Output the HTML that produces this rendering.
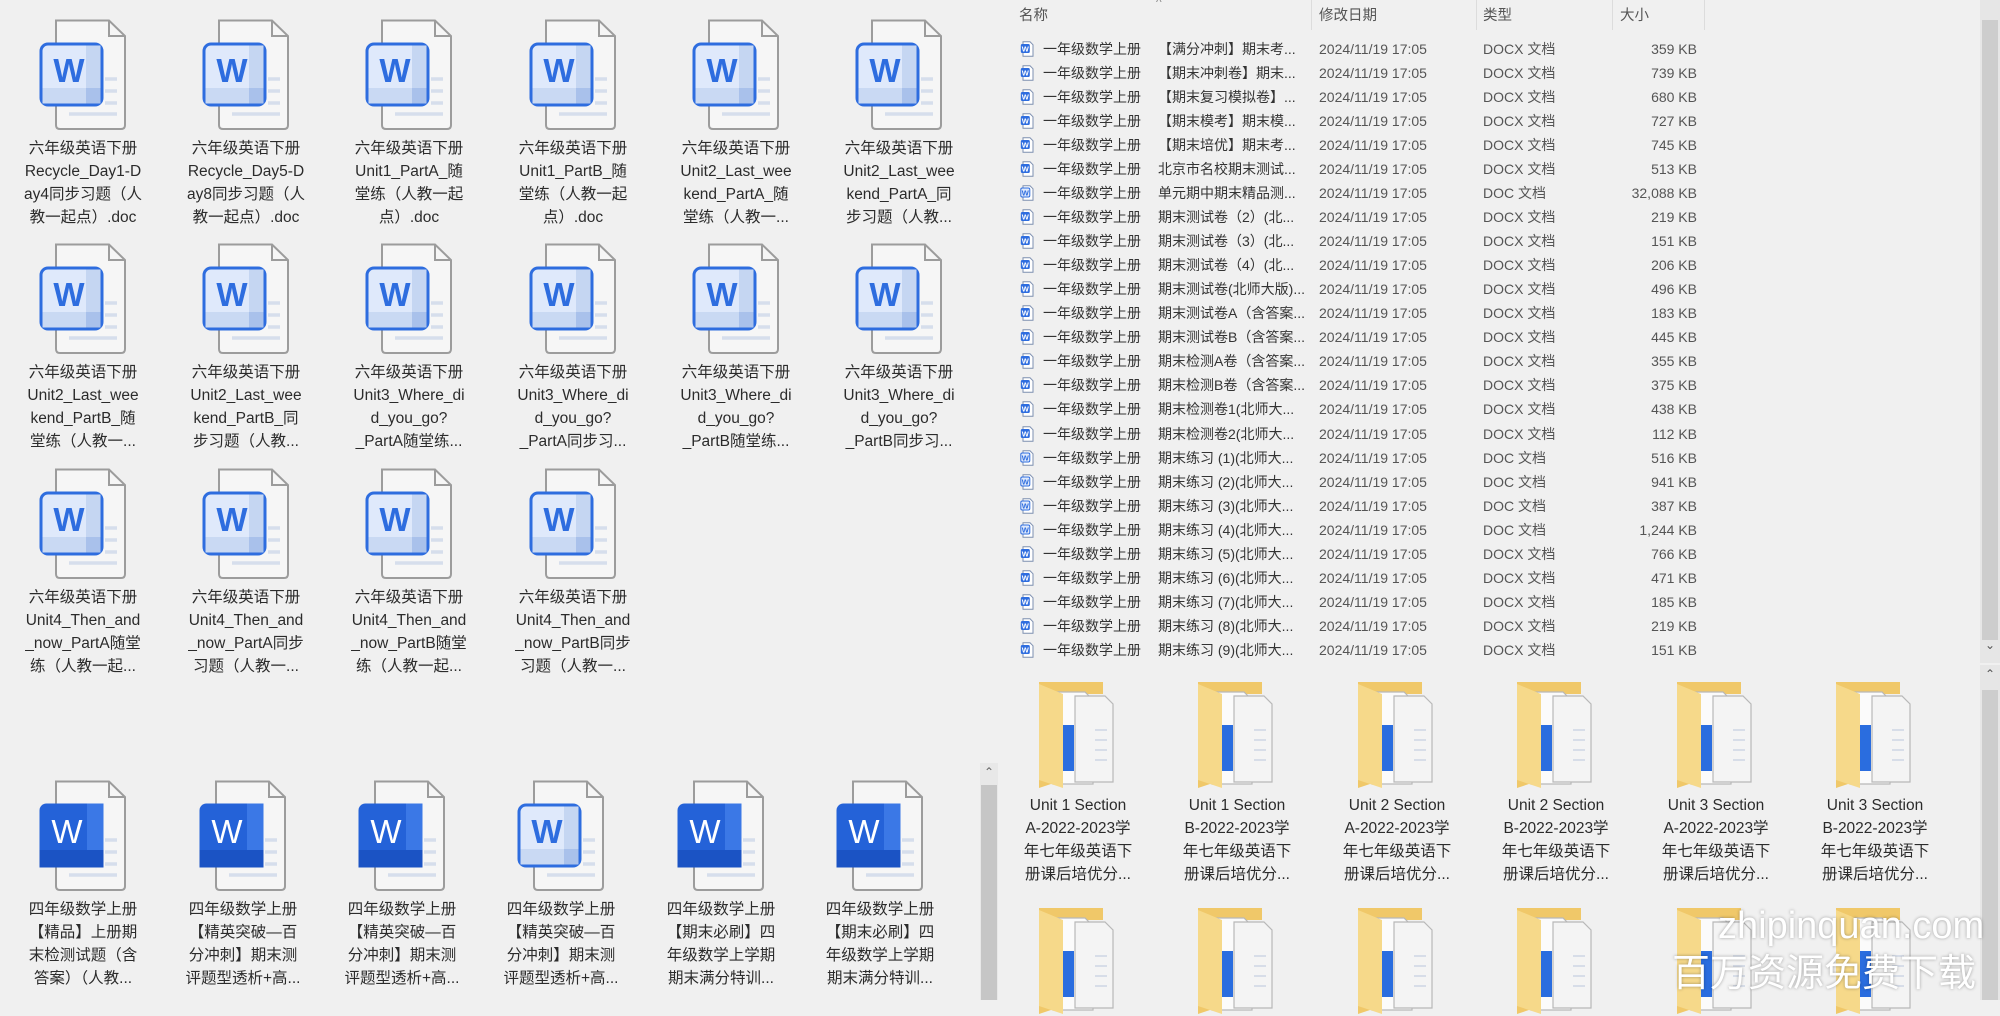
<!DOCTYPE html>
<html><head><meta charset="utf-8">
<style>
*{margin:0;padding:0;box-sizing:border-box}
body{width:2000px;height:1000px;background:#f0f0f0;position:relative;overflow:hidden;font-family:"Liberation Sans","Noto Sans CJK SC",sans-serif;color:#2b2b2b}
.it{position:absolute;width:170px;text-align:center;font-size:15.5px;line-height:23px}
.it svg{display:block;margin:0 auto}
.it div{white-space:nowrap}
.ic{position:absolute}
.hd{position:absolute;top:4px;font-size:14.5px;color:#555;line-height:24px}
.L{position:absolute;left:1020px;top:37px;width:700px;font-size:14px;line-height:24.04px;color:#333}
.L>div{position:relative;height:24.04px}
.L svg{position:absolute;left:0;top:4px}
.L span{position:absolute}
.a{left:23px}.b{left:138px}.c{left:299px;color:#555}.d{left:463px;color:#555}.e{right:23px;color:#555}
</style></head><body>
<svg width="0" height="0" style="position:absolute">
<defs>
<symbol id="wl" viewBox="0 0 88 112">
<path d="M17,1.5 H70 L86,17 V106 Q86,110 82,110 H21 Q17,110 17,106 Z" fill="#f6f6f6" stroke="#9c9c9c" stroke-width="2"/>
<path d="M70,1.5 V17 H86" fill="none" stroke="#9c9c9c" stroke-width="2"/>
<g stroke="#d6deec" stroke-width="3.5"><line x1="66" y1="60" x2="78" y2="60"/><line x1="66" y1="72" x2="78" y2="72"/><line x1="66" y1="84" x2="78" y2="84"/><line x1="30" y1="95" x2="78" y2="95"/></g>
<rect x="2" y="25" width="61" height="61" rx="7" fill="#dfe9fb" stroke="#2e6ddf" stroke-width="3"/>
<rect x="47" y="26.5" width="14.5" height="58" fill="#c5d6f2"/>
<rect x="3.5" y="69" width="58" height="15.5" fill="#c9d9f3"/>
<rect x="47" y="69" width="14.5" height="15.5" fill="#a9c1eb"/>
<text x="30" y="63" text-anchor="middle" font-family="Liberation Sans,sans-serif" font-weight="bold" font-size="33" fill="#2e6ddf">W</text>
</symbol>
<symbol id="wd" viewBox="0 0 88 112">
<path d="M17,1.5 H70 L86,17 V106 Q86,110 82,110 H21 Q17,110 17,106 Z" fill="#f6f6f6" stroke="#9c9c9c" stroke-width="2"/>
<path d="M70,1.5 V17 H86" fill="none" stroke="#9c9c9c" stroke-width="2"/>
<g stroke="#d6deec" stroke-width="3.5"><line x1="66" y1="60" x2="78" y2="60"/><line x1="66" y1="72" x2="78" y2="72"/><line x1="66" y1="84" x2="78" y2="84"/><line x1="30" y1="95" x2="78" y2="95"/></g>
<rect x="0.5" y="23.5" width="64" height="64" rx="7" fill="#2462d8"/>
<rect x="48" y="23.5" width="16.5" height="64" fill="#3b78e6"/>
<rect x="0.5" y="70" width="64" height="17.5" fill="#1b53c4"/>
<text x="28" y="63" text-anchor="middle" font-family="Liberation Sans,sans-serif" font-size="33" fill="#fff">W</text>
</symbol>
<symbol id="fd" viewBox="0 0 82 110">
<path d="M2,2 H66 V14 H26 V100 L2,108 Z" fill="#f0c869"/>
<path d="M16,12 H48 L56,20 V104 H16 Z" fill="#fbfbfb" stroke="#b8b8b8" stroke-width="1.2"/>
<path d="M38,16 H68 L76,24 V102 H38 Z" fill="#f4f4f4" stroke="#b8b8b8" stroke-width="1.2"/>
<g stroke="#d7dde8" stroke-width="2"><line x1="58" y1="50" x2="70" y2="50"/><line x1="58" y1="60" x2="70" y2="60"/><line x1="58" y1="70" x2="70" y2="70"/><line x1="58" y1="80" x2="70" y2="80"/></g>
<rect x="22" y="45" width="15" height="46" fill="#2a6ddf"/>
<path d="M2,4 L26,14 V108 L2,100 Z" fill="#f6d98a"/>
</symbol>
<symbol id="sm" viewBox="0 0 14 16">
<path d="M3,0.8 H10 L13,3.8 V15.2 H3 Z" fill="#fff" stroke="#7d8fb0" stroke-width="1"/>
<rect x="0.8" y="3" width="9" height="9" rx="1.5" fill="#2e6ddf"/>
<text x="5.3" y="10.5" text-anchor="middle" font-family="Liberation Sans,sans-serif" font-size="7.5" font-weight="bold" fill="#fff">W</text>
</symbol>
<symbol id="sl" viewBox="0 0 14 16">
<path d="M3,0.8 H10 L13,3.8 V15.2 H3 Z" fill="#fff" stroke="#7d8fb0" stroke-width="1"/>
<rect x="0.8" y="3" width="9" height="9" rx="1.5" fill="#dfe9fb" stroke="#2e6ddf" stroke-width="1"/>
<text x="5.3" y="10.5" text-anchor="middle" font-family="Liberation Sans,sans-serif" font-size="7.5" font-weight="bold" fill="#2e6ddf">W</text>
</symbol>
</defs></svg>

<!-- Left top grid -->
<div class="it" style="left:-2px;top:19px"><svg width="100" height="112" viewBox="-6 0 100 112"><use href="#wl" width="88" height="112"/></svg><div style="margin-top:6px">六年级英语下册</div><div>Recycle_Day1-D</div><div>ay4同步习题（人</div><div>教一起点）.doc</div></div>
<div class="it" style="left:161px;top:19px"><svg width="100" height="112" viewBox="-6 0 100 112"><use href="#wl" width="88" height="112"/></svg><div style="margin-top:6px">六年级英语下册</div><div>Recycle_Day5-D</div><div>ay8同步习题（人</div><div>教一起点）.doc</div></div>
<div class="it" style="left:324px;top:19px"><svg width="100" height="112" viewBox="-6 0 100 112"><use href="#wl" width="88" height="112"/></svg><div style="margin-top:6px">六年级英语下册</div><div>Unit1_PartA_随</div><div>堂练（人教一起</div><div>点）.doc</div></div>
<div class="it" style="left:488px;top:19px"><svg width="100" height="112" viewBox="-6 0 100 112"><use href="#wl" width="88" height="112"/></svg><div style="margin-top:6px">六年级英语下册</div><div>Unit1_PartB_随</div><div>堂练（人教一起</div><div>点）.doc</div></div>
<div class="it" style="left:651px;top:19px"><svg width="100" height="112" viewBox="-6 0 100 112"><use href="#wl" width="88" height="112"/></svg><div style="margin-top:6px">六年级英语下册</div><div>Unit2_Last_wee</div><div>kend_PartA_随</div><div>堂练（人教一...</div></div>
<div class="it" style="left:814px;top:19px"><svg width="100" height="112" viewBox="-6 0 100 112"><use href="#wl" width="88" height="112"/></svg><div style="margin-top:6px">六年级英语下册</div><div>Unit2_Last_wee</div><div>kend_PartA_同</div><div>步习题（人教...</div></div>

<div class="it" style="left:-2px;top:243px"><svg width="100" height="112" viewBox="-6 0 100 112"><use href="#wl" width="88" height="112"/></svg><div style="margin-top:6px">六年级英语下册</div><div>Unit2_Last_wee</div><div>kend_PartB_随</div><div>堂练（人教一...</div></div>
<div class="it" style="left:161px;top:243px"><svg width="100" height="112" viewBox="-6 0 100 112"><use href="#wl" width="88" height="112"/></svg><div style="margin-top:6px">六年级英语下册</div><div>Unit2_Last_wee</div><div>kend_PartB_同</div><div>步习题（人教...</div></div>
<div class="it" style="left:324px;top:243px"><svg width="100" height="112" viewBox="-6 0 100 112"><use href="#wl" width="88" height="112"/></svg><div style="margin-top:6px">六年级英语下册</div><div>Unit3_Where_di</div><div>d_you_go?</div><div>_PartA随堂练...</div></div>
<div class="it" style="left:488px;top:243px"><svg width="100" height="112" viewBox="-6 0 100 112"><use href="#wl" width="88" height="112"/></svg><div style="margin-top:6px">六年级英语下册</div><div>Unit3_Where_di</div><div>d_you_go?</div><div>_PartA同步习...</div></div>
<div class="it" style="left:651px;top:243px"><svg width="100" height="112" viewBox="-6 0 100 112"><use href="#wl" width="88" height="112"/></svg><div style="margin-top:6px">六年级英语下册</div><div>Unit3_Where_di</div><div>d_you_go?</div><div>_PartB随堂练...</div></div>
<div class="it" style="left:814px;top:243px"><svg width="100" height="112" viewBox="-6 0 100 112"><use href="#wl" width="88" height="112"/></svg><div style="margin-top:6px">六年级英语下册</div><div>Unit3_Where_di</div><div>d_you_go?</div><div>_PartB同步习...</div></div>

<div class="it" style="left:-2px;top:468px"><svg width="100" height="112" viewBox="-6 0 100 112"><use href="#wl" width="88" height="112"/></svg><div style="margin-top:6px">六年级英语下册</div><div>Unit4_Then_and</div><div>_now_PartA随堂</div><div>练（人教一起...</div></div>
<div class="it" style="left:161px;top:468px"><svg width="100" height="112" viewBox="-6 0 100 112"><use href="#wl" width="88" height="112"/></svg><div style="margin-top:6px">六年级英语下册</div><div>Unit4_Then_and</div><div>_now_PartA同步</div><div>习题（人教一...</div></div>
<div class="it" style="left:324px;top:468px"><svg width="100" height="112" viewBox="-6 0 100 112"><use href="#wl" width="88" height="112"/></svg><div style="margin-top:6px">六年级英语下册</div><div>Unit4_Then_and</div><div>_now_PartB随堂</div><div>练（人教一起...</div></div>
<div class="it" style="left:488px;top:468px"><svg width="100" height="112" viewBox="-6 0 100 112"><use href="#wl" width="88" height="112"/></svg><div style="margin-top:6px">六年级英语下册</div><div>Unit4_Then_and</div><div>_now_PartB同步</div><div>习题（人教一...</div></div>

<!-- Left bottom grid -->
<div class="it" style="left:-2px;top:780px"><svg width="100" height="112" viewBox="-6 0 100 112"><use href="#wd" width="88" height="112"/></svg><div style="margin-top:6px">四年级数学上册</div><div>【精品】上册期</div><div>末检测试题（含</div><div>答案）（人教...</div></div>
<div class="it" style="left:158px;top:780px"><svg width="100" height="112" viewBox="-6 0 100 112"><use href="#wd" width="88" height="112"/></svg><div style="margin-top:6px">四年级数学上册</div><div>【精英突破—百</div><div>分冲刺】期末测</div><div>评题型透析+高...</div></div>
<div class="it" style="left:317px;top:780px"><svg width="100" height="112" viewBox="-6 0 100 112"><use href="#wd" width="88" height="112"/></svg><div style="margin-top:6px">四年级数学上册</div><div>【精英突破—百</div><div>分冲刺】期末测</div><div>评题型透析+高...</div></div>
<div class="it" style="left:476px;top:780px"><svg width="100" height="112" viewBox="-6 0 100 112"><use href="#wl" width="88" height="112"/></svg><div style="margin-top:6px">四年级数学上册</div><div>【精英突破—百</div><div>分冲刺】期末测</div><div>评题型透析+高...</div></div>
<div class="it" style="left:636px;top:780px"><svg width="100" height="112" viewBox="-6 0 100 112"><use href="#wd" width="88" height="112"/></svg><div style="margin-top:6px">四年级数学上册</div><div>【期末必刷】四</div><div>年级数学上学期</div><div>期末满分特训...</div></div>
<div class="it" style="left:795px;top:780px"><svg width="100" height="112" viewBox="-6 0 100 112"><use href="#wd" width="88" height="112"/></svg><div style="margin-top:6px">四年级数学上册</div><div>【期末必刷】四</div><div>年级数学上学期</div><div>期末满分特训...</div></div>

<!-- left bottom scrollbar -->
<div style="position:absolute;left:980px;top:763px;width:18px;height:237px;background:#e8e8e8"></div>
<div style="position:absolute;left:981px;top:785px;width:16px;height:215px;background:#c6c6c6"></div>
<div style="position:absolute;left:984px;top:765px;font-size:12px;color:#666">&#8963;</div>

<!-- right top list -->
<div class="hd" style="left:1019px">名称</div>
<div class="hd" style="left:1156px;top:-10px;color:#888;font-size:12px">^</div>
<div class="hd" style="left:1319px">修改日期</div>
<div class="hd" style="left:1483px">类型</div>
<div class="hd" style="left:1620px">大小</div>
<div style="position:absolute;left:1311px;top:0;width:1px;height:30px;background:#dcdcdc"></div>
<div style="position:absolute;left:1476px;top:0;width:1px;height:30px;background:#dcdcdc"></div>
<div style="position:absolute;left:1612px;top:0;width:1px;height:30px;background:#dcdcdc"></div>
<div style="position:absolute;left:1704px;top:0;width:1px;height:30px;background:#dcdcdc"></div>

<div class="L">
<div><svg width="14" height="16"><use href="#sm"/></svg><span class="a">一年级数学上册</span><span class="b">【满分冲刺】期末考...</span><span class="c">2024/11/19 17:05</span><span class="d">DOCX 文档</span><span class="e">359 KB</span></div>
<div><svg width="14" height="16"><use href="#sm"/></svg><span class="a">一年级数学上册</span><span class="b">【期末冲刺卷】期末...</span><span class="c">2024/11/19 17:05</span><span class="d">DOCX 文档</span><span class="e">739 KB</span></div>
<div><svg width="14" height="16"><use href="#sm"/></svg><span class="a">一年级数学上册</span><span class="b">【期末复习模拟卷】...</span><span class="c">2024/11/19 17:05</span><span class="d">DOCX 文档</span><span class="e">680 KB</span></div>
<div><svg width="14" height="16"><use href="#sm"/></svg><span class="a">一年级数学上册</span><span class="b">【期末模考】期末模...</span><span class="c">2024/11/19 17:05</span><span class="d">DOCX 文档</span><span class="e">727 KB</span></div>
<div><svg width="14" height="16"><use href="#sm"/></svg><span class="a">一年级数学上册</span><span class="b">【期末培优】期末考...</span><span class="c">2024/11/19 17:05</span><span class="d">DOCX 文档</span><span class="e">745 KB</span></div>
<div><svg width="14" height="16"><use href="#sm"/></svg><span class="a">一年级数学上册</span><span class="b">北京市名校期末测试...</span><span class="c">2024/11/19 17:05</span><span class="d">DOCX 文档</span><span class="e">513 KB</span></div>
<div><svg width="14" height="16"><use href="#sl"/></svg><span class="a">一年级数学上册</span><span class="b">单元期中期末精品测...</span><span class="c">2024/11/19 17:05</span><span class="d">DOC 文档</span><span class="e">32,088 KB</span></div>
<div><svg width="14" height="16"><use href="#sm"/></svg><span class="a">一年级数学上册</span><span class="b">期末测试卷（2）(北...</span><span class="c">2024/11/19 17:05</span><span class="d">DOCX 文档</span><span class="e">219 KB</span></div>
<div><svg width="14" height="16"><use href="#sm"/></svg><span class="a">一年级数学上册</span><span class="b">期末测试卷（3）(北...</span><span class="c">2024/11/19 17:05</span><span class="d">DOCX 文档</span><span class="e">151 KB</span></div>
<div><svg width="14" height="16"><use href="#sm"/></svg><span class="a">一年级数学上册</span><span class="b">期末测试卷（4）(北...</span><span class="c">2024/11/19 17:05</span><span class="d">DOCX 文档</span><span class="e">206 KB</span></div>
<div><svg width="14" height="16"><use href="#sm"/></svg><span class="a">一年级数学上册</span><span class="b">期末测试卷(北师大版)...</span><span class="c">2024/11/19 17:05</span><span class="d">DOCX 文档</span><span class="e">496 KB</span></div>
<div><svg width="14" height="16"><use href="#sm"/></svg><span class="a">一年级数学上册</span><span class="b">期末测试卷A（含答案...</span><span class="c">2024/11/19 17:05</span><span class="d">DOCX 文档</span><span class="e">183 KB</span></div>
<div><svg width="14" height="16"><use href="#sm"/></svg><span class="a">一年级数学上册</span><span class="b">期末测试卷B（含答案...</span><span class="c">2024/11/19 17:05</span><span class="d">DOCX 文档</span><span class="e">445 KB</span></div>
<div><svg width="14" height="16"><use href="#sm"/></svg><span class="a">一年级数学上册</span><span class="b">期末检测A卷（含答案...</span><span class="c">2024/11/19 17:05</span><span class="d">DOCX 文档</span><span class="e">355 KB</span></div>
<div><svg width="14" height="16"><use href="#sm"/></svg><span class="a">一年级数学上册</span><span class="b">期末检测B卷（含答案...</span><span class="c">2024/11/19 17:05</span><span class="d">DOCX 文档</span><span class="e">375 KB</span></div>
<div><svg width="14" height="16"><use href="#sm"/></svg><span class="a">一年级数学上册</span><span class="b">期末检测卷1(北师大...</span><span class="c">2024/11/19 17:05</span><span class="d">DOCX 文档</span><span class="e">438 KB</span></div>
<div><svg width="14" height="16"><use href="#sm"/></svg><span class="a">一年级数学上册</span><span class="b">期末检测卷2(北师大...</span><span class="c">2024/11/19 17:05</span><span class="d">DOCX 文档</span><span class="e">112 KB</span></div>
<div><svg width="14" height="16"><use href="#sl"/></svg><span class="a">一年级数学上册</span><span class="b">期末练习 (1)(北师大...</span><span class="c">2024/11/19 17:05</span><span class="d">DOC 文档</span><span class="e">516 KB</span></div>
<div><svg width="14" height="16"><use href="#sl"/></svg><span class="a">一年级数学上册</span><span class="b">期末练习 (2)(北师大...</span><span class="c">2024/11/19 17:05</span><span class="d">DOC 文档</span><span class="e">941 KB</span></div>
<div><svg width="14" height="16"><use href="#sl"/></svg><span class="a">一年级数学上册</span><span class="b">期末练习 (3)(北师大...</span><span class="c">2024/11/19 17:05</span><span class="d">DOC 文档</span><span class="e">387 KB</span></div>
<div><svg width="14" height="16"><use href="#sl"/></svg><span class="a">一年级数学上册</span><span class="b">期末练习 (4)(北师大...</span><span class="c">2024/11/19 17:05</span><span class="d">DOC 文档</span><span class="e">1,244 KB</span></div>
<div><svg width="14" height="16"><use href="#sm"/></svg><span class="a">一年级数学上册</span><span class="b">期末练习 (5)(北师大...</span><span class="c">2024/11/19 17:05</span><span class="d">DOCX 文档</span><span class="e">766 KB</span></div>
<div><svg width="14" height="16"><use href="#sm"/></svg><span class="a">一年级数学上册</span><span class="b">期末练习 (6)(北师大...</span><span class="c">2024/11/19 17:05</span><span class="d">DOCX 文档</span><span class="e">471 KB</span></div>
<div><svg width="14" height="16"><use href="#sm"/></svg><span class="a">一年级数学上册</span><span class="b">期末练习 (7)(北师大...</span><span class="c">2024/11/19 17:05</span><span class="d">DOCX 文档</span><span class="e">185 KB</span></div>
<div><svg width="14" height="16"><use href="#sm"/></svg><span class="a">一年级数学上册</span><span class="b">期末练习 (8)(北师大...</span><span class="c">2024/11/19 17:05</span><span class="d">DOCX 文档</span><span class="e">219 KB</span></div>
<div><svg width="14" height="16"><use href="#sm"/></svg><span class="a">一年级数学上册</span><span class="b">期末练习 (9)(北师大...</span><span class="c">2024/11/19 17:05</span><span class="d">DOCX 文档</span><span class="e">151 KB</span></div>
</div>

<!-- right top scrollbar -->
<div style="position:absolute;left:1980px;top:0;width:20px;height:663px;background:#e6e6e6"></div>
<div style="position:absolute;left:1982px;top:20px;width:16px;height:620px;background:#cdcdcd"></div>
<div style="position:absolute;left:1985px;top:638px;font-size:12px;color:#555">&#8964;</div>

<!-- right bottom folders -->
<div class="it" style="left:993px;top:680px"><svg width="82" height="110"><use href="#fd"/></svg><div style="margin-top:4px">Unit 1 Section</div><div>A-2022-2023学</div><div>年七年级英语下</div><div>册课后培优分...</div></div>
<div class="it" style="left:1152px;top:680px"><svg width="82" height="110"><use href="#fd"/></svg><div style="margin-top:4px">Unit 1 Section</div><div>B-2022-2023学</div><div>年七年级英语下</div><div>册课后培优分...</div></div>
<div class="it" style="left:1312px;top:680px"><svg width="82" height="110"><use href="#fd"/></svg><div style="margin-top:4px">Unit 2 Section</div><div>A-2022-2023学</div><div>年七年级英语下</div><div>册课后培优分...</div></div>
<div class="it" style="left:1471px;top:680px"><svg width="82" height="110"><use href="#fd"/></svg><div style="margin-top:4px">Unit 2 Section</div><div>B-2022-2023学</div><div>年七年级英语下</div><div>册课后培优分...</div></div>
<div class="it" style="left:1631px;top:680px"><svg width="82" height="110"><use href="#fd"/></svg><div style="margin-top:4px">Unit 3 Section</div><div>A-2022-2023学</div><div>年七年级英语下</div><div>册课后培优分...</div></div>
<div class="it" style="left:1790px;top:680px"><svg width="82" height="110"><use href="#fd"/></svg><div style="margin-top:4px">Unit 3 Section</div><div>B-2022-2023学</div><div>年七年级英语下</div><div>册课后培优分...</div></div>

<div class="it" style="left:993px;top:906px"><svg width="82" height="110"><use href="#fd"/></svg></div>
<div class="it" style="left:1152px;top:906px"><svg width="82" height="110"><use href="#fd"/></svg></div>
<div class="it" style="left:1312px;top:906px"><svg width="82" height="110"><use href="#fd"/></svg></div>
<div class="it" style="left:1471px;top:906px"><svg width="82" height="110"><use href="#fd"/></svg></div>
<div class="it" style="left:1631px;top:906px"><svg width="82" height="110"><use href="#fd"/></svg></div>
<div class="it" style="left:1790px;top:906px"><svg width="82" height="110"><use href="#fd"/></svg></div>

<!-- right bottom scrollbar -->
<div style="position:absolute;left:1980px;top:665px;width:20px;height:335px;background:#e6e6e6"></div>
<div style="position:absolute;left:1982px;top:690px;width:16px;height:310px;background:#cdcdcd"></div>
<div style="position:absolute;left:1985px;top:667px;font-size:12px;color:#555">&#8963;</div>

<!-- watermark -->
<div style="position:absolute;left:1718px;top:904px;font-size:38px;line-height:44px;color:#fff;text-shadow:0 0 3px rgba(0,0,0,.35);white-space:nowrap">zhipinquan.com</div>
<div style="position:absolute;left:1672px;top:952px;font-size:38px;line-height:44px;color:#fff;text-shadow:0 0 3px rgba(0,0,0,.35);white-space:nowrap">百万资源免费下载</div>
</body></html>
